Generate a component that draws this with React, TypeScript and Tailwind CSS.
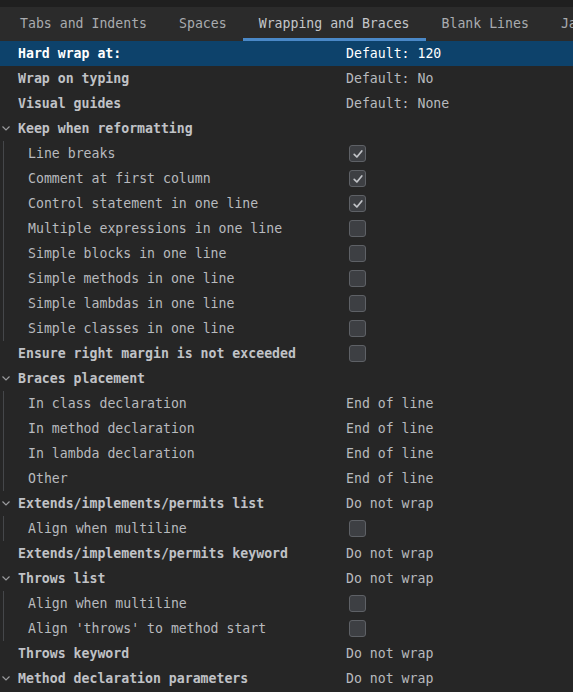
import React from "react";

type Row = {
  label: string;
  value?: string;
  check?: boolean;
  bold?: boolean;
  selected?: boolean;
  group?: boolean;
};

type Group = { head: Row; items: Row[] };

const tabs = ["Tabs and Indents", "Spaces", "Wrapping and Braces", "Blank Lines", "Ja"];

const blocks: (Row | Group)[] = [
  { label: "Hard wrap at:", value: "Default: 120", bold: true, selected: true },
  { label: "Wrap on typing", value: "Default: No", bold: true },
  { label: "Visual guides", value: "Default: None", bold: true },
  {
    head: { label: "Keep when reformatting", bold: true, group: true },
    items: [
      { label: "Line breaks", check: true },
      { label: "Comment at first column", check: true },
      { label: "Control statement in one line", check: true },
      { label: "Multiple expressions in one line", check: false },
      { label: "Simple blocks in one line", check: false },
      { label: "Simple methods in one line", check: false },
      { label: "Simple lambdas in one line", check: false },
      { label: "Simple classes in one line", check: false },
    ],
  },
  { label: "Ensure right margin is not exceeded", check: false, bold: true },
  {
    head: { label: "Braces placement", bold: true, group: true },
    items: [
      { label: "In class declaration", value: "End of line" },
      { label: "In method declaration", value: "End of line" },
      { label: "In lambda declaration", value: "End of line" },
      { label: "Other", value: "End of line" },
    ],
  },
  {
    head: { label: "Extends/implements/permits list", value: "Do not wrap", bold: true, group: true },
    items: [{ label: "Align when multiline", check: false }],
  },
  { label: "Extends/implements/permits keyword", value: "Do not wrap", bold: true },
  {
    head: { label: "Throws list", value: "Do not wrap", bold: true, group: true },
    items: [
      { label: "Align when multiline", check: false },
      { label: "Align 'throws' to method start", check: false },
    ],
  },
  { label: "Throws keyword", value: "Do not wrap", bold: true },
  {
    head: { label: "Method declaration parameters", value: "Do not wrap", bold: true, group: true },
    items: [],
  },
];

function Chevron() {
  return (
    <svg width="12" height="12" viewBox="0 0 12 12" className="shrink-0">
      <polyline points="2.5,4.5 6,8 9.5,4.5" fill="none" stroke="#9a9b9e" strokeWidth="1.2" />
    </svg>
  );
}

function Checkbox({ on }: { on: boolean }) {
  return (
    <div className="w-[17px] h-[17px] ml-[3px] rounded-[3px] border border-[#5e6166] bg-[#3d3f43] flex items-center justify-center">
      {on && (
        <svg width="12" height="12" viewBox="0 0 12 12">
          <polyline points="2.2,6.3 4.9,9 9.8,3" fill="none" stroke="#c2c4c8" strokeWidth="1.7" strokeLinecap="round" strokeLinejoin="round" />
        </svg>
      )}
    </div>
  );
}

function Line({ row, child }: { row: Row; child?: boolean }) {
  return (
    <div className={`flex h-[25px] items-center ${row.selected ? "bg-[#0d426b]" : ""}`}>
      <div className={`flex items-center shrink-0 ${child ? "w-[342px] pl-[24px]" : "w-[346px]"}`}>
        {!child && (
          <div className="w-[18px] shrink-0 flex items-center">
            {row.group && <Chevron />}
          </div>
        )}
        <span
          className={`whitespace-pre ${row.bold ? "font-bold" : ""} ${
            row.selected ? "text-white" : row.bold ? "text-[#c0c2c6]" : "text-[#b8babe]"
          }`}
        >
          {row.label}
        </span>
      </div>
      {row.value && (
        <span className={`whitespace-pre ${row.selected ? "text-white" : "text-[#b8babe]"}`}>{row.value}</span>
      )}
      {row.check !== undefined && <Checkbox on={row.check} />}
    </div>
  );
}

export default function App() {
  return (
    <div
      className="w-[573px] h-[692px] overflow-hidden bg-[#262626] text-[13.2px]"
      style={{ fontFamily: '"DejaVu Sans Mono", "Liberation Mono", monospace' }}
    >
      {/* top strip */}
      <div className="h-[7px] bg-[#1f1f1f]" />

      {/* tabs */}
      <div className="h-[34px] bg-[#2b2b2b] flex pl-[4px] whitespace-nowrap">
        {tabs.map((t) => {
          const active = t === "Wrapping and Braces";
          return (
            <div
              key={t}
              className={`px-[16px] pt-[3px] flex items-center shrink-0 border-b-[3px] ${
                active ? "border-[#4a88c7] text-[#c4c6ca]" : "border-transparent text-[#a9abaf]"
              }`}
            >
              {t}
            </div>
          );
        })}
      </div>

      {/* settings tree */}
      <div>
        {blocks.map((b, i) =>
          "head" in b ? (
            <div key={i}>
              <Line row={b.head} />
              {b.items.length > 0 && (
                <div className="flex">
                  <div className="w-px ml-[3px] bg-[#45474a] shrink-0" />
                  <div className="flex-1">
                    {b.items.map((r, j) => (
                      <Line key={j} row={r} child />
                    ))}
                  </div>
                </div>
              )}
            </div>
          ) : (
            <Line key={i} row={b} />
          )
        )}
      </div>
    </div>
  );
}
